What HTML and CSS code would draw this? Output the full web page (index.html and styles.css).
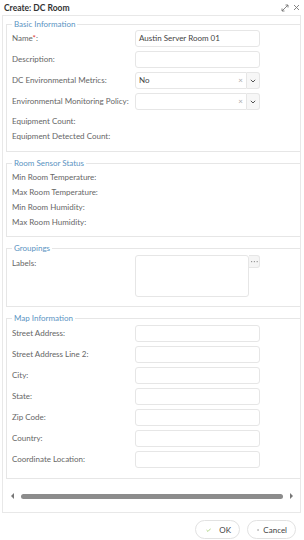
FILE: index.html
```html
<!DOCTYPE HTML>
<html>
<head>
<meta charset="utf-8">
<title>Create: DC Room</title>
<link rel="stylesheet" href="styles.css">
</head>
<body>
<div class="dialog">
  <div class="titlebar">
    <span class="title">Create: DC Room</span>
    <span class="tools">
      <svg class="tool" width="8" height="8" viewBox="0 0 8 8"><path d="M1 7L7 1M4.5 1H7V3.5M1 4.5V7H3.5" fill="none" stroke="#777" stroke-width="0.9"/></svg>
      <svg class="tool" width="7" height="7" viewBox="0 0 7 7"><path d="M1 1L6 6M6 1L1 6" fill="none" stroke="#777" stroke-width="0.9"/></svg>
    </span>
  </div>

  <div class="panel">
    <div class="scroller">

      <fieldset class="group first">
        <legend>Basic Information</legend>
        <div class="row">
          <label>Name<span class="req">*</span>:</label>
          <div class="input">Austin Server Room 01</div>
        </div>
        <div class="row">
          <label>Description:</label>
          <div class="input"></div>
        </div>
        <div class="row">
          <label>DC Environmental Metrics:</label>
          <div class="select">
            <div class="selbox">No<span class="clear">&times;</span></div>
            <div class="selbtn"><svg width="6" height="4" viewBox="0 0 6 4"><path d="M0.8 0.8L3 3L5.2 0.8" fill="none" stroke="#555" stroke-width="1"/></svg></div>
          </div>
        </div>
        <div class="row">
          <label>Environmental Monitoring Policy:</label>
          <div class="select">
            <div class="selbox"><span class="clear">&times;</span></div>
            <div class="selbtn"><svg width="6" height="4" viewBox="0 0 6 4"><path d="M0.8 0.8L3 3L5.2 0.8" fill="none" stroke="#555" stroke-width="1"/></svg></div>
          </div>
        </div>
        <div class="line">Equipment Count:</div>
        <div class="line">Equipment Detected Count:</div>
      </fieldset>

      <fieldset class="group">
        <legend>Room Sensor Status</legend>
        <div class="line">Min Room Temperature:</div>
        <div class="line">Max Room Temperature:</div>
        <div class="line">Min Room Humidity:</div>
        <div class="line">Max Room Humidity:</div>
      </fieldset>

      <fieldset class="group groupings">
        <legend>Groupings</legend>
        <div class="row tall">
          <label>Labels:</label>
          <div class="picker">
            <div class="area"></div>
            <div class="more"><svg width="7" height="2" viewBox="0 0 7 2"><rect x="0" y="0" width="1.2" height="1.2" fill="#999"/><rect x="2.8" y="0" width="1.2" height="1.2" fill="#999"/><rect x="5.6" y="0" width="1.2" height="1.2" fill="#999"/></svg></div>
          </div>
        </div>
      </fieldset>

      <fieldset class="group map">
        <legend>Map Information</legend>
        <div class="row"><label>Street Address:</label><div class="input"></div></div>
        <div class="row"><label>Street Address Line 2:</label><div class="input"></div></div>
        <div class="row"><label>City:</label><div class="input"></div></div>
        <div class="row"><label>State:</label><div class="input"></div></div>
        <div class="row"><label>Zip Code:</label><div class="input"></div></div>
        <div class="row"><label>Country:</label><div class="input"></div></div>
        <div class="row"><label>Coordinate Location:</label><div class="input"></div></div>
      </fieldset>

    </div>
    <div class="hscroll">
      <span class="arrow left"></span>
      <span class="thumb"></span>
      <span class="arrow right"></span>
    </div>
  </div>

  <div class="actions">
    <button class="btn"><svg width="8" height="6" viewBox="0 0 8 6"><path d="M0.8 3L3 5.2L7.2 0.8" fill="none" stroke="#8cc152" stroke-width="1"/></svg>OK</button>
    <button class="btn"><svg width="6" height="6" viewBox="0 0 6 6"><path d="M0.6 0.6L5.4 5.4M5.4 0.6L0.6 5.4" fill="none" stroke="#555" stroke-width="0.9"/></svg>Cancel</button>
  </div>
</div>
</body>
</html>
```
FILE: styles.css
```css
body {
  margin:0;
  font-family:Lato, "Noto Sans", sans-serif;
  font-size:8px;
  color:#666;
  background:#fff;
}
.dialog {
  width:304px;
  height:540px;
  display:flex;
  flex-direction:column;
}
.titlebar {
  height:15px;
  display:flex;
  align-items:center;
  justify-content:space-between;
  padding:0 4px 0 4px;
  box-sizing:border-box;
}
.title {
  font-weight:bold;
  color:#333;
  font-size:8.5px;
}
.tools {
  display:flex;
  align-items:center;
  gap:4px;
}
.tool { display:block; }

.panel {
  margin:0 3px 0 2px;
  height:498px;
  box-sizing:border-box;
  border:1px solid #e8e8e8;
  padding:3px 0 0 3px;
  display:flex;
  flex-direction:column;
}
.scroller {
  overflow:hidden;
}
fieldset.group {
  width:330px;
  box-sizing:border-box;
  margin:6px 0 0 0;
  padding:2px 0 6px 5px;
  border:1px solid #e6e6e6;
  min-width:0;
}
fieldset.group.first {
  margin-top:0;
  padding-top:1px;
  padding-bottom:7px;
}
fieldset.groupings { padding-bottom:9px; }
fieldset.map { padding-bottom:10px; }
legend {
  padding:0 2px;
  color:#5a93c2;
  font-size:8px;
  line-height:10px;
}

.row {
  display:flex;
  align-items:flex-start;
  margin-bottom:4px;
}
.row:last-child { margin-bottom:0; }
.row label {
  width:123px;
  flex:none;
  line-height:17px;
}
.req { color:#d33; }
.line {
  line-height:15px;
}
.input {
  width:125px;
  height:17px;
  box-sizing:border-box;
  border:1px solid #e6e6e6;
  border-radius:3px;
  padding:0 3px;
  line-height:15px;
  color:#444;
}
.select {
  display:flex;
  width:125px;
  height:17px;
}
.selbox {
  flex:1;
  box-sizing:border-box;
  border:1px solid #e6e6e6;
  border-radius:3px 0 0 3px;
  padding:0 3px;
  line-height:15px;
  color:#444;
  display:flex;
  justify-content:space-between;
}
.selbox .clear {
  margin-left:auto;
  color:#aaa;
  font-size:8px;
}
.selbtn {
  width:13px;
  box-sizing:border-box;
  border:1px solid #e6e6e6;
  border-left:none;
  border-radius:0 3px 3px 0;
  background:#f7f7f7;
  display:flex;
  align-items:center;
  justify-content:center;
}
.picker {
  display:flex;
  align-items:flex-start;
}
.area {
  width:114px;
  height:42px;
  box-sizing:border-box;
  border:1px solid #e6e6e6;
  border-radius:3px;
}
.more {
  width:11px;
  height:13px;
  box-sizing:border-box;
  border:1px solid #e6e6e6;
  border-left:none;
  border-radius:0 3px 3px 0;
  background:#f5f5f5;
  display:flex;
  align-items:center;
  justify-content:center;
}

.hscroll {
  display:flex;
  align-items:center;
  height:10px;
  margin-top:12px;
  padding-left:5px;
}
.arrow {
  width:0;
  height:0;
  border-top:3px solid transparent;
  border-bottom:3px solid transparent;
}
.arrow.left { border-right:3px solid #777; }
.arrow.right { border-left:3px solid #777; }
.thumb {
  width:262px;
  height:5px;
  margin:0 7px;
  border-radius:3px;
  background:#8c8c8c;
}

.actions {
  display:flex;
  justify-content:flex-end;
  gap:7px;
  padding:7px 8px 0 0;
}
.btn {
  height:19px;
  box-sizing:border-box;
  border:1px solid #e2e2e2;
  border-radius:10px;
  background:#fff;
  font-family:Lato, "Noto Sans", sans-serif;
  font-size:8px;
  color:#444;
  display:flex;
  align-items:center;
  gap:6px;
  padding:0 8px 0 9px;
}
.btn:first-child { width:45px; padding-left:10px; gap:8px; }
.btn:last-child { width:49px; gap:4px; }
```
